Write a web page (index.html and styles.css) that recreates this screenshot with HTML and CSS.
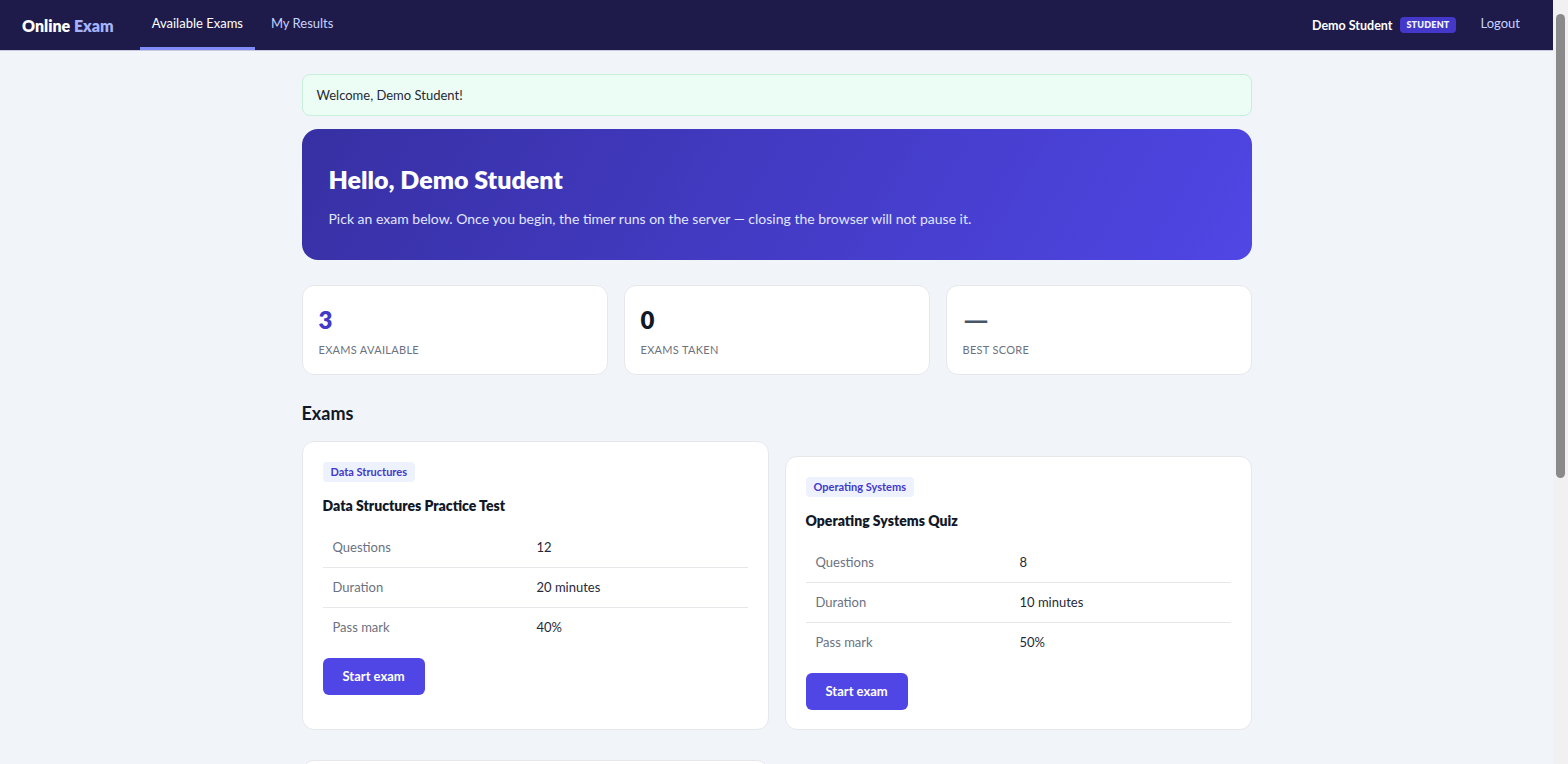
FILE: index.html
```html
<!DOCTYPE html>
<html lang="en">
<head>
    <meta charset="UTF-8">
    <meta name="viewport" content="width=device-width, initial-scale=1.0">
    <title>Available Exams - Online Exam</title>
    <link rel="stylesheet" href="styles.css">
</head>
<body>
    <!-- Top navigation -->
    <nav class="navbar">
        <a href="#" class="brand">Online <span>Exam</span></a>
        <div class="nav-links">
            <a href="#" class="nav-link active">Available Exams</a>
            <a href="#" class="nav-link">My Results</a>
        </div>
        <div class="nav-user">
            <span class="user-name">Demo Student</span>
            <span class="role-badge">Student</span>
            <a href="#" class="nav-link logout">Logout</a>
        </div>
    </nav>

    <main class="container">
        <div class="alert">Welcome, Demo Student!</div>

        <section class="hero">
            <h1>Hello, Demo Student</h1>
            <p>Pick an exam below. Once you begin, the timer runs on the server — closing the browser will not pause it.</p>
        </section>

        <!-- Stats -->
        <section class="stats">
            <div class="stat-card">
                <div class="stat-value accent">3</div>
                <div class="stat-label">Exams available</div>
            </div>
            <div class="stat-card">
                <div class="stat-value">0</div>
                <div class="stat-label">Exams taken</div>
            </div>
            <div class="stat-card">
                <div class="stat-value muted">—</div>
                <div class="stat-label">Best score</div>
            </div>
        </section>

        <h2 class="section-title">Exams</h2>

        <section class="exam-grid">
            <div class="exam-card raised">
                <span class="tag">Data Structures</span>
                <h3>Data Structures Practice Test</h3>
                <table class="meta">
                    <tr><td>Questions</td><td>12</td></tr>
                    <tr><td>Duration</td><td>20 minutes</td></tr>
                    <tr><td>Pass mark</td><td>40%</td></tr>
                </table>
                <button type="button" class="btn">Start exam</button>
            </div>

            <div class="exam-card">
                <span class="tag">Operating Systems</span>
                <h3>Operating Systems Quiz</h3>
                <table class="meta">
                    <tr><td>Questions</td><td>8</td></tr>
                    <tr><td>Duration</td><td>10 minutes</td></tr>
                    <tr><td>Pass mark</td><td>50%</td></tr>
                </table>
                <button type="button" class="btn">Start exam</button>
            </div>

            <div class="exam-card">
                <span class="tag">Computer Networks</span>
                <h3>Computer Networks Basics</h3>
                <table class="meta">
                    <tr><td>Questions</td><td>10</td></tr>
                    <tr><td>Duration</td><td>15 minutes</td></tr>
                    <tr><td>Pass mark</td><td>50%</td></tr>
                </table>
                <button type="button" class="btn">Start exam</button>
            </div>
        </section>
    </main>
</body>
</html>
```

FILE: styles.css
```css
/* General */
* {
    box-sizing: border-box;
}

/* room for the scrollbar gutter */
html {
    background-color: #f1f1f1;
}

body {
    margin: 0 15px 0 0;
    font-family: Lato, "Noto Sans", sans-serif;
    font-size: 14px;
    background-color: #f1f4f9;
    color: #1f2937;
}

body::after {
    content: "";
    position: fixed;
    top: 14px;
    right: 3px;
    width: 9px;
    height: 464px;
    background-color: #8a8a8a;
    border-radius: 5px;
}

a {
    text-decoration: none;
}

/* Navbar */
.navbar {
    display: flex;
    align-items: center;
    height: 50px;
    padding: 0 21px 0 22px;
    background-color: #1e1b4b;
    box-shadow: 0 1px 0 #c9cbe0;
}

.brand {
    font-size: 16px;
    font-weight: 800;
    color: #fff;
    margin-right: 26px;
}

.brand span {
    color: #a5b4fc;
}

.nav-links {
    display: flex;
    gap: 4px;
    height: 100%;
}

.nav-link {
    display: flex;
    align-items: center;
    height: 50px;
    padding: 0 12px 1px;
    color: #c7d2fe;
    font-size: 13px;
    border-bottom: 3px solid transparent;
}

.nav-link.active {
    color: #fff;
    border-bottom-color: #818cf8;
}

.nav-user {
    display: flex;
    align-items: center;
    margin-left: auto;
}

.user-name {
    color: #fff;
    font-weight: 700;
    font-size: 12.5px;
    margin-right: 8px;
}

.role-badge {
    background-color: #4338ca;
    color: #eef2ff;
    font-size: 9px;
    font-weight: 800;
    text-transform: uppercase;
    letter-spacing: 0.2px;
    line-height: 12px;
    padding: 2px 6px;
    border-radius: 4px;
    margin-right: 13px;
}

/* Layout */
.container {
    max-width: 950px;
    margin: 0 auto;
    padding: 24px 0 170px;
}

.alert {
    background-color: #ecfdf5;
    border: 1px solid #c6f0da;
    border-radius: 8px;
    padding: 11px 14px;
    font-size: 13px;
    line-height: 18px;
    margin-bottom: 13px;
}

/* Hero */
.hero {
    background: linear-gradient(120deg, #3730a3 0%, #4f46e5 100%);
    border-radius: 16px;
    padding: 35px 27px 31px;
    color: #fff;
    margin-bottom: 25px;
}

.hero h1 {
    margin: 0 0 14px;
    font-size: 25px;
    line-height: 31px;
    font-weight: 800;
}

.hero p {
    margin: 0;
    line-height: 20px;
    color: #e0e7ff;
}

/* Stats */
.stats {
    display: grid;
    grid-template-columns: repeat(3, 1fr);
    gap: 16px;
}

.stat-card {
    background-color: #fff;
    border: 1px solid #e5e7eb;
    border-radius: 12px;
    padding: 19px 16px 17px;
}

.stat-value {
    font-size: 24px;
    line-height: 30px;
    font-weight: 800;
    color: #111827;
    margin-bottom: 8px;
}

.stat-value.accent {
    color: #4338ca;
}

.stat-value.muted {
    color: #475569;
    transform: scaleX(1.35);
    transform-origin: left center;
}

.stat-label {
    font-size: 11px;
    line-height: 14px;
    text-transform: uppercase;
    letter-spacing: 0.3px;
    color: #6b7280;
}

.section-title {
    font-size: 18px;
    line-height: 22px;
    margin: 27px 0 17px;
    color: #111827;
}

/* Exam cards */
.exam-grid {
    display: grid;
    grid-template-columns: repeat(2, 1fr);
    gap: 30px 16px;
    align-items: end;
}

.exam-card {
    background-color: #fff;
    border: 1px solid #e5e7eb;
    border-radius: 12px;
    padding: 20px 20px 19px;
}

.exam-card.raised {
    padding-bottom: 34px;
}

.tag {
    display: inline-block;
    background-color: #eef2ff;
    color: #4338ca;
    font-size: 11px;
    font-weight: 700;
    line-height: 12px;
    padding: 4px 8px;
    border-radius: 4px;
}

.exam-card h3 {
    margin: 14px 0 12px;
    font-size: 14px;
    line-height: 20px;
    font-weight: 800;
    color: #111827;
}

.meta {
    width: 100%;
    border-collapse: collapse;
    font-size: 13px;
}

.meta td {
    padding: 10px;
    line-height: 19px;
    border-bottom: 1px solid #e5e7eb;
}

.meta tr:last-child td {
    border-bottom: none;
}

.meta td:first-child {
    width: 48%;
    color: #6b7280;
}

.btn {
    margin-top: 11px;
    background-color: #4f46e5;
    color: #fff;
    border: none;
    border-radius: 6px;
    padding: 10px 20px;
    font-family: inherit;
    font-size: 13px;
    line-height: 17px;
    font-weight: 700;
    cursor: pointer;
}

.btn:hover {
    background-color: #4338ca;
}
```
